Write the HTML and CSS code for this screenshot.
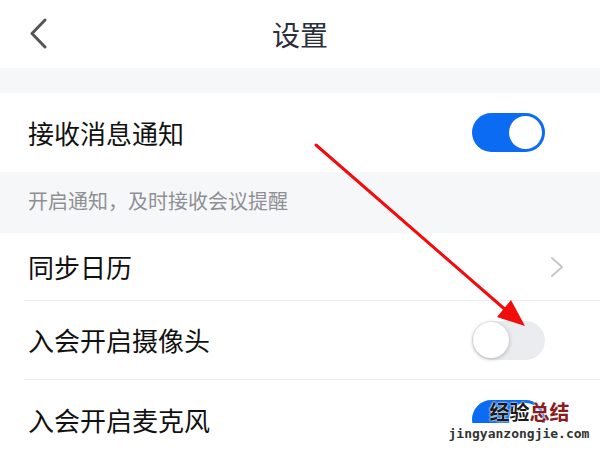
FILE: index.html
```html
<!DOCTYPE html>
<html lang="zh">
<head>
<meta charset="utf-8">
<link rel="stylesheet" href="styles.css">
</head>
<body>
<div class="page">
  <header class="header">
    <svg class="back" width="20" height="32" viewBox="0 0 20 32"><path d="M16 2 L3 15.5 L16 29" fill="none" stroke="#555" stroke-width="3" stroke-linecap="round" stroke-linejoin="round"/></svg>
    <h1 class="title">设置</h1>
    <span></span>
  </header>
  <div class="gap"></div>
  <div class="row row-main">
    <span class="label">接收消息通知</span>
    <span class="switch on"><span class="knob"></span></span>
  </div>
  <div class="hint">开启通知，及时接收会议提醒</div>
  <div class="row row-cal">
    <span class="label">同步日历</span>
    <svg class="arrow-right" width="14" height="22" viewBox="0 0 14 22"><path d="M2 2 L12 11 L2 20" fill="none" stroke="#c6c6c8" stroke-width="2" stroke-linecap="round" stroke-linejoin="round"/></svg>
  </div>
  <div class="row row-item">
    <span class="label">入会开启摄像头</span>
    <span class="switch off"><span class="knob"></span></span>
  </div>
  <div class="row row-item last">
    <span class="label">入会开启麦克风</span>
    <span class="switch on"><span class="knob"></span></span>
  </div>

  <svg class="annot" width="600" height="450" viewBox="0 0 600 450">
    <line x1="316" y1="145" x2="508" y2="312" stroke="#f20c0c" stroke-width="3" stroke-linecap="round"/>
    <polygon points="525,326 497,317 511,300" fill="#f20c0c"/>
  </svg>

  <div class="watermark">
    <div class="wm-title"><span class="wm-black">经验</span><span class="wm-red">总结</span></div>
    <div class="wm-url">jingyanzongjie.com</div>
  </div>
</div>
</body>
</html>
```
FILE: styles.css
```css
* { box-sizing: border-box; }
html, body { margin: 0; padding: 0; background: #fff; }
body {
  font-family: "Noto Sans CJK SC", "Noto Sans", sans-serif;
  width: 600px;
  height: 450px;
  overflow: hidden;
}
.page { position: relative; width: 600px; height: 450px; overflow: hidden; }

.header {
  height: 68px;
  display: grid;
  grid-template-columns: 1fr auto 1fr;
  align-items: center;
  padding-left: 29px;
}
.back { display: block; }
.title {
  margin: 0;
  font-size: 28px;
  font-weight: 400;
  color: #2c2e3e;
  line-height: 1;
  margin-left: -29px;
}

.gap { height: 25px; background: #f6f7f9; }

.row {
  display: flex;
  align-items: center;
  justify-content: space-between;
  padding: 0 55px 0 28px;
  background: #fff;
}
.label { font-size: 26px; color: #111; line-height: 1; }
.row-main { height: 79px; }
.row-cal { height: 68px; padding-right: 36px; border-bottom: 1px solid #ededed; margin-left: 24px; padding-left: 4px; }
.row-item { height: 79px; border-bottom: 1px solid #ededed; margin-left: 24px; padding-left: 4px; }
.row-item.last { border-bottom: none; }

.hint {
  height: 61px;
  background: #f6f7f9;
  display: flex;
  align-items: center;
  padding-left: 28px;
  padding-bottom: 5px;
  font-size: 20px;
  color: #8f9096;
}

.switch {
  width: 73px;
  height: 39px;
  border-radius: 20px;
  position: relative;
  flex: none;
}
.switch.on { background: #0b6cf3; }
.switch.off { background: #ebecef; }
.knob {
  position: absolute;
  top: 3px;
  width: 33px;
  height: 33px;
  border-radius: 50%;
  background: #fff;
}
.switch.on .knob { right: 3px; }
.switch.off .knob { left: 1px; top: 1px; width: 36px; height: 36px; box-shadow: 0 1px 4px rgba(0,0,0,0.25); }

.arrow-right { display: block; }

.annot { position: absolute; left: 0; top: 0; pointer-events: none; }

.watermark {
  position: absolute;
  left: 448px;
  top: 401px;
  width: 142px;
  height: 49px;
  text-align: center;
  background: linear-gradient(to bottom, transparent 0, transparent 22px, #fff 22px);
}
.wm-title {
  font-size: 20px;
  font-weight: 700;
  line-height: 22px;
  letter-spacing: 0;
  margin-left: 21px;
  text-shadow: 0 0 2px #fff, 0 0 2px #fff;
}
.wm-black { color: #1a1a1a; }
.wm-red { color: #8a1c1c; }
.wm-url {
  font-family: "DejaVu Sans Mono", monospace;
  font-size: 13px;
  font-weight: 700;
  color: #333;
  line-height: 16px;
  margin-top: 3px;
}
```
